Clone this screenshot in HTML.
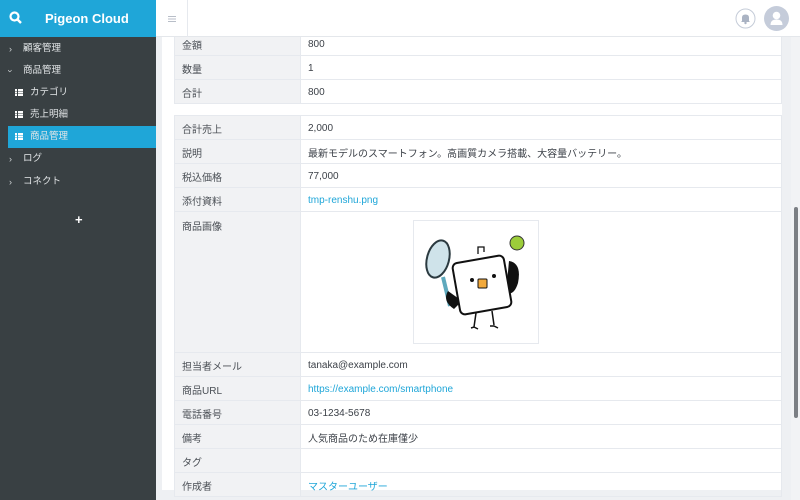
<!DOCTYPE html>
<html><head><meta charset="utf-8">
<style>
*{margin:0;padding:0;box-sizing:border-box}
body{width:800px;height:500px;overflow:hidden;background:#eef0f3;font-family:"Liberation Sans","Noto Sans CJK JP",sans-serif;font-size:10px;color:#3c4148;position:relative}
.side{position:absolute;left:0;top:0;width:156px;height:500px;background:#394043}
.logo{position:absolute;left:0;top:0;width:156px;height:37px;background:#1fa6d8;color:#fff}
.logo b{position:absolute;left:45px;top:11px;font-size:13px;font-weight:bold}
.nav{position:absolute;left:0;color:#e3e6e8;font-size:9.5px;height:22px;line-height:22px;width:156px}
.nav .ar{position:absolute;left:9px;font-size:9px;color:#cfd3d5}
.nav .t{position:absolute;left:23px}
.nav.sub .t{left:30px}
.nav .ic{position:absolute;left:15px;top:7px;width:8px;height:7px;background:linear-gradient(#fff 0 2px,transparent 2px 2.5px,#fff 2.5px 4.5px,transparent 4.5px 5px,#fff 5px 7px)}
.nav .ic:after{content:"";position:absolute;left:2px;top:0;width:1px;height:7px;background:#394043}
.nav.act{background:#1fa6d8;left:8px;width:148px}
.nav.act .ic{left:7px}.nav.act .ic:after{background:#1fa6d8}
.nav.act .t{left:22px}
.head{position:absolute;left:156px;top:0;width:644px;height:37px;background:#fff;border-bottom:1px solid #e4e7eb}
.card{position:absolute;left:162px;top:37px;width:620px;height:453px;background:#fff}
table{position:absolute;left:174px;width:608px;border-collapse:collapse;font-size:10px}
td{border:1px solid #e6e9ee;height:24px;padding:1px 7px 0;vertical-align:middle}
td.l{width:126px;background:#f1f2f4;color:#4a4f55}
a{color:#1fa6d8;text-decoration:none}
</style></head><body>
<div class="card"></div>
<table style="top:31px">
<tr><td class="l">金額</td><td>800</td></tr>
<tr><td class="l">数量</td><td>1</td></tr>
<tr><td class="l">合計</td><td>800</td></tr>
</table>
<table style="top:115px">
<tr><td class="l">合計売上</td><td>2,000</td></tr>
<tr><td class="l">説明</td><td>最新モデルのスマートフォン。高画質カメラ搭載、大容量バッテリー。</td></tr>
<tr><td class="l">税込価格</td><td>77,000</td></tr>
<tr><td class="l">添付資料</td><td><a>tmp-renshu.png</a></td></tr>
<tr><td class="l" style="height:141px;vertical-align:top;padding-top:6px">商品画像</td><td style="position:relative">
<div style="position:absolute;left:112px;top:8px;width:126px;height:124px;border:1px solid #e6e9ee">
<svg width="126" height="124" viewBox="0 0 126 124">
<ellipse cx="24" cy="38" rx="11" ry="19" transform="rotate(15 24 38)" fill="#cfe3ea" stroke="#2b3a40" stroke-width="2"/>
<line x1="29" y1="56" x2="36" y2="85" stroke="#5fa9bd" stroke-width="4"/>
<path d="M34 70 Q28 80 40 88 L48 80Z" fill="#111"/>
<path d="M95 40 Q108 42 104 62 Q100 75 92 72Z" fill="#111"/>
<circle cx="103" cy="22" r="7" fill="#9ccd3a" stroke="#333" stroke-width="1"/>
<rect x="42" y="38" width="52" height="52" rx="5" transform="rotate(-10 68 64)" fill="#fff" stroke="#111" stroke-width="2"/>
<path d="M64 33 l0 -7 l6 0 l0 5" fill="none" stroke="#111" stroke-width="1.3"/>
<circle cx="58" cy="59" r="2" fill="#111"/><circle cx="80" cy="55" r="2" fill="#111"/>
<rect x="64" y="58" width="9" height="9" rx="1" fill="#f2a93b" stroke="#111"/>
<path d="M62 92 l-2 14 M57 107 l3 -1 l4 2 M78 90 l2 14 M76 105 l4 0 l4 2" stroke="#111" stroke-width="1.5" fill="none"/>
</svg></div></td></tr>
<tr><td class="l">担当者メール</td><td>tanaka@example.com</td></tr>
<tr><td class="l">商品URL</td><td><a>https://example.com/smartphone</a></td></tr>
<tr><td class="l">電話番号</td><td>03-1234-5678</td></tr>
<tr><td class="l">備考</td><td>人気商品のため在庫僅少</td></tr>
<tr><td class="l">タグ</td><td></td></tr>
<tr><td class="l">作成者</td><td><a>マスターユーザー</a></td></tr>
</table>
<div style="position:absolute;left:791px;top:37px;width:9px;height:463px;background:#f2f3f5"></div>
<div style="position:absolute;left:794px;top:207px;width:4px;height:211px;border-radius:2px;background:#7c7f84"></div>
<div class="head">
<div style="position:absolute;left:31px;top:0;width:1px;height:37px;background:#e6e9ee"></div>
<div style="position:absolute;left:12px;top:16px;width:8px;height:6px;background:linear-gradient(#b8bec8 0 1px,transparent 1px 2.5px,#b8bec8 2.5px 3.5px,transparent 3.5px 5px,#b8bec8 5px 6px)"></div>
<svg style="position:absolute;left:579px;top:8px" width="21" height="21"><circle cx="10.5" cy="10.5" r="9.5" fill="#fff" stroke="#c5ccd8"/><path d="M7 13 L7 9.5 Q7 6.5 10.5 6.5 Q14 6.5 14 9.5 L14 13 L15 14 L6 14Z" fill="#aab3c3"/><circle cx="10.5" cy="15" r="1.2" fill="#aab3c3"/></svg>
<svg style="position:absolute;left:608px;top:6px" width="25" height="25"><circle cx="12.5" cy="12.5" r="12.5" fill="#c5ccda"/><circle cx="12.5" cy="9.5" r="3.8" fill="#fff"/><path d="M6.5 19 Q6.5 13.5 12.5 13.5 Q18.5 13.5 18.5 19Z" fill="#fff"/></svg>
</div>
<div class="side">
<div class="logo"><svg style="position:absolute;left:9px;top:11px" width="13" height="13"><circle cx="5.5" cy="5.5" r="4" fill="none" stroke="#fff" stroke-width="2.2"/><line x1="8.5" y1="8.5" x2="12" y2="12" stroke="#fff" stroke-width="2.4"/></svg><b>Pigeon Cloud</b></div>
<div class="nav" style="top:38px"><span class="ar">›</span><span class="t">顧客管理</span></div>
<div class="nav" style="top:60px"><span class="ar" style="transform:rotate(90deg)">›</span><span class="t">商品管理</span></div>
<div class="nav sub" style="top:82px"><span class="ic"></span><span class="t">カテゴリ</span></div>
<div class="nav sub" style="top:104px"><span class="ic"></span><span class="t">売上明細</span></div>
<div class="nav act" style="top:126px"><span class="ic"></span><span class="t">商品管理</span></div>
<div class="nav" style="top:148px"><span class="ar">›</span><span class="t">ログ</span></div>
<div class="nav" style="top:171px"><span class="ar">›</span><span class="t">コネクト</span></div>
<div style="position:absolute;left:75px;top:212px;color:#fff;font-size:13px;font-weight:bold">+</div>
</div>
</body></html>
